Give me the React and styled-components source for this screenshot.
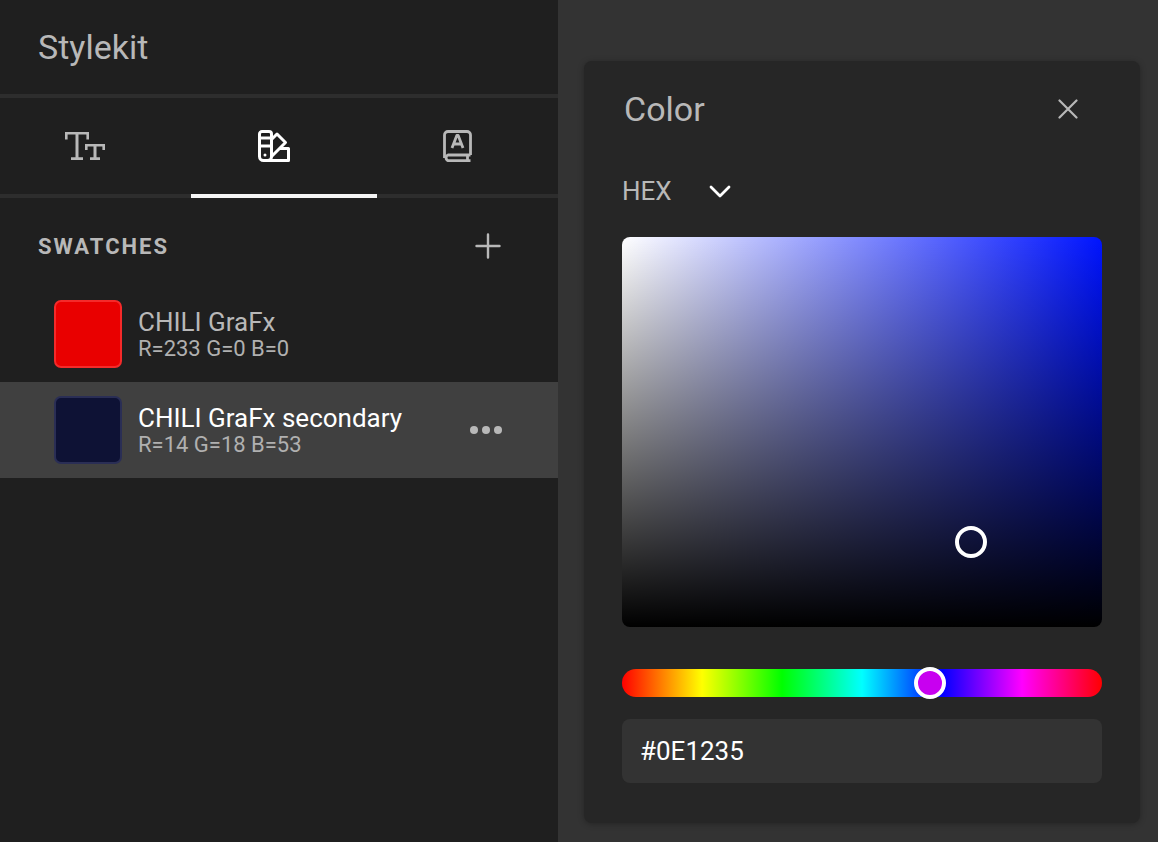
import React from "react";
import styled, { createGlobalStyle } from "styled-components";

const Global = createGlobalStyle`
  html, body { margin: 0; padding: 0; height: 100%; background: #333; overflow: hidden; }
  * { box-sizing: border-box; }
  #root { height: 100%; }
  body { font-family: Roboto, "Liberation Sans", sans-serif; }
`;

const Page = styled.div`
  display: flex;
  width: 1158px;
  height: 842px;
  background: #333333;
`;

const Sidebar = styled.aside`
  width: 558px;
  flex: none;
  background: #1f1f1f;
  display: flex;
  flex-direction: column;
`;

const Header = styled.header`
  height: 94px;
  padding: 29px 0 0 38px;
  font-size: 34px;
  line-height: 36px;
  color: #b8b8b8;
`;

const Tabs = styled.nav`
  display: grid;
  grid-template-columns: 186px 186px 1fr;
  height: 104px;
  padding-left: 5px;
  border-top: 4px solid #2d2d2d;
  border-bottom: 4px solid #2d2d2d;
`;

const Tab = styled.button`
  position: relative;
  border: 0;
  padding: 0 ${(p) => p.$nudge}px 0 0;
  background: none;
  color: ${(p) => (p.$active ? "#ffffff" : "#b8b8b8")};
  display: flex;
  align-items: center;
  justify-content: center;
  &::after {
    content: "";
    display: ${(p) => (p.$active ? "block" : "none")};
    position: absolute;
    left: 0;
    right: 0;
    bottom: -4px;
    height: 4px;
    background: #f5f5f5;
  }
`;

const SectionHead = styled.div`
  display: flex;
  align-items: center;
  justify-content: space-between;
  padding: 18px 57px 0 38px;
  height: 78px;
`;

const SectionTitle = styled.h2`
  margin: 0;
  font-size: 22px;
  font-weight: 700;
  letter-spacing: 2px;
  color: #b8b8b8;
`;

const SwatchList = styled.ul`
  list-style: none;
  margin: 0;
  padding: 10px 0 0;
`;

const Row = styled.li`
  height: 96px;
  display: flex;
  align-items: center;
  padding: 0 54px;
  background: ${(p) => (p.$selected ? "#404040" : "transparent")};
`;

const Chip = styled.div`
  width: 68px;
  height: 68px;
  flex: none;
  border-radius: 7px;
  background: ${(p) => p.$color};
  border: 2px solid ${(p) => p.$edge};
`;

const RowText = styled.div`
  flex: 1;
  margin-left: 16px;
  padding-top: 2px;
  display: flex;
  flex-direction: column;
`;

const RowName = styled.div`
  font-size: 26px;
  line-height: 28px;
  color: ${(p) => (p.$selected ? "#ffffff" : "#b8b8b8")};
`;

const RowMeta = styled.div`
  font-size: 22px;
  line-height: 26px;
  color: #b0b0b0;
`;

const Dots = styled.div`
  display: flex;
  gap: 4px;
  margin-right: 2px;
  & > i {
    width: 8px;
    height: 8px;
    border-radius: 50%;
    background: #b8b8b8;
  }
`;

const Canvas = styled.main`
  flex: 1;
  padding: 61px 18px 18px 26px;
`;

const Panel = styled.section`
  width: 556px;
  height: 762px;
  background: #262626;
  border-radius: 8px;
  box-shadow: 0 1px 6px rgba(0, 0, 0, 0.3);
  padding: 0 38px 0 38px;
  display: flex;
  flex-direction: column;
`;

const PanelHead = styled.div`
  display: flex;
  align-items: center;
  justify-content: space-between;
  height: 95px;
  padding: 0 24px 0 2px;
`;

const PanelTitle = styled.h3`
  margin: 0;
  font-size: 34px;
  font-weight: 400;
  color: #b8b8b8;
`;

const ModeRow = styled.div`
  display: flex;
  align-items: center;
  height: 34px;
  margin-top: 18px;
  gap: 37px;
  font-size: 26px;
  color: #b8b8b8;
`;

const Field = styled.div`
  position: relative;
  height: 390px;
  margin-top: 29px;
  border-radius: 8px;
  background: linear-gradient(to bottom, rgba(0, 0, 0, 0), #000),
    linear-gradient(to right, #fff, #0014ff);
`;

const FieldHandle = styled.div`
  position: absolute;
  left: 333px;
  top: 289px;
  width: 32px;
  height: 32px;
  border-radius: 50%;
  border: 4px solid #fff;
`;

const HueTrack = styled.div`
  position: relative;
  height: 28px;
  margin-top: 42px;
  border-radius: 14px;
  background: linear-gradient(
    to right,
    #f00 0%,
    #ff0 16.67%,
    #0f0 33.33%,
    #0ff 50%,
    #00f 66.67%,
    #f0f 83.33%,
    #f00 100%
  );
`;

const HueThumb = styled.div`
  position: absolute;
  left: 292px;
  top: -2px;
  width: 32px;
  height: 32px;
  border-radius: 50%;
  border: 4px solid #fff;
  background: #c800f0;
`;

const HexInput = styled.div`
  height: 64px;
  margin-top: 22px;
  border-radius: 8px;
  background: #333333;
  padding: 0 18px;
  display: flex;
  align-items: center;
  font-size: 26px;
  color: #ffffff;
`;

const TextIcon = () => (
  <svg width="40" height="28" viewBox="0 0 40 28" fill="none" stroke="currentColor" strokeWidth="2.6">
    <path d="M1.300 7.500V1.300H22.700V7.500" />
    <path d="M12 1.300V26.500M6 26.700H18" strokeWidth="3" />
    <path d="M21.300 18V13.300H38.700V18" />
    <path d="M30 13.300V26.500M25 26.700H35" strokeWidth="3" />
  </svg>
);

const PaletteIcon = () => (
  <svg width="32" height="32" viewBox="0 0 32 32" fill="none" stroke="currentColor" strokeWidth="3" strokeLinejoin="round">
    <path d="M1.500 4a2.500 2.500 0 0 1 2.500-2.500h7A2.500 2.500 0 0 1 13.500 4v22.500a4 4 0 0 1-4 4H5.500a4 4 0 0 1-4-4Z" />
    <path d="M1.500 8h12M1.500 16h12" />
    <path d="M13.500 9.500L19 4l8.500 8.500L13 27" />
    <path d="M21 18.500h9.500v12H7" />
    <circle cx="7" cy="25" r="1.500" fill="currentColor" stroke="none" />
  </svg>
);

const BookIcon = () => (
  <svg width="29" height="32" viewBox="0 0 29 32" fill="none" stroke="currentColor" strokeWidth="2.800" strokeLinejoin="round">
    <path d="M27.500 25H5a3 3 0 0 0 0 5.600h22.500" />
    <path d="M1.500 28V5a3.500 3.500 0 0 1 3.500-3.500h19A3.500 3.500 0 0 1 27.500 5v20" />
    <path d="M24.500 25v5.600" />
    <path d="M9 18l4.800-12.500h1.400L20 18M11 14h7" />
  </svg>
);

const PlusIcon = () => (
  <svg width="26" height="26" viewBox="0 0 26 26" stroke="#b8b8b8" strokeWidth="2.400" strokeLinecap="round">
    <path d="M13 1.500v23M1.500 13h23" />
  </svg>
);

const CloseIcon = () => (
  <svg width="20" height="20" viewBox="0 0 20 20" stroke="#b8b8b8" strokeWidth="2.200" strokeLinecap="round">
    <path d="M1.500 1.500l17 17M18.500 1.500l-17 17" />
  </svg>
);

const ChevronIcon = () => (
  <svg width="22" height="14" viewBox="0 0 22 14" fill="none" stroke="#ffffff" strokeWidth="2.800" strokeLinecap="round" strokeLinejoin="round">
    <path d="M2 3l9 9 9-9" />
  </svg>
);

export default function App() {
  return (
    <Page>
      <Global />
      <Sidebar>
        <Header>Stylekit</Header>
        <Tabs>
          <Tab $nudge={26} aria-label="Text"><TextIcon /></Tab>
          <Tab $nudge={20} $active aria-label="Colors"><PaletteIcon /></Tab>
          <Tab $nudge={20} aria-label="Library"><BookIcon /></Tab>
        </Tabs>
        <SectionHead>
          <SectionTitle>SWATCHES</SectionTitle>
          <PlusIcon />
        </SectionHead>
        <SwatchList>
          <Row>
            <Chip $color="#e90000" $edge="#f52a2a" />
            <RowText>
              <RowName>CHILI GraFx</RowName>
              <RowMeta>R=233 G=0 B=0</RowMeta>
            </RowText>
          </Row>
          <Row $selected>
            <Chip $color="#0e1235" $edge="#2a2e55" />
            <RowText>
              <RowName $selected>CHILI GraFx secondary</RowName>
              <RowMeta>R=14 G=18 B=53</RowMeta>
            </RowText>
            <Dots><i /><i /><i /></Dots>
          </Row>
        </SwatchList>
      </Sidebar>
      <Canvas>
        <Panel>
          <PanelHead>
            <PanelTitle>Color</PanelTitle>
            <CloseIcon />
          </PanelHead>
          <ModeRow>
            HEX
            <ChevronIcon />
          </ModeRow>
          <Field>
            <FieldHandle />
          </Field>
          <HueTrack>
            <HueThumb />
          </HueTrack>
          <HexInput>#0E1235</HexInput>
        </Panel>
      </Canvas>
    </Page>
  );
}
